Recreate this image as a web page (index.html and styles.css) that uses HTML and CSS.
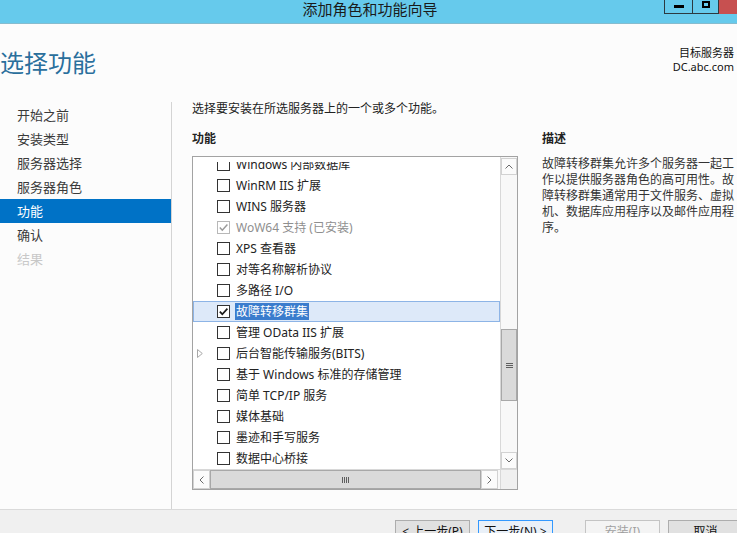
FILE: index.html
```html
<!DOCTYPE html>
<html lang="zh-CN">
<head>
<meta charset="utf-8">
<title>添加角色和功能向导</title>
<link rel="stylesheet" href="styles.css">
</head>
<body>
<div class="window">
  <header class="titlebar">
    <span></span>
    <div class="title">添加角色和功能向导</div>
    <div class="controls">
      <span class="ctl ctl-min"><i></i></span>
      <span class="ctl ctl-max"><i></i></span>
      <span class="ctl ctl-close"></span>
    </div>
  </header>

  <div class="header">
    <h1>选择功能</h1>
    <div class="target">
      <div>目标服务器</div>
      <div>DC.abc.com</div>
    </div>
  </div>

  <div class="content">
    <nav class="steps">
      <div class="step">开始之前</div>
      <div class="step">安装类型</div>
      <div class="step">服务器选择</div>
      <div class="step">服务器角色</div>
      <div class="step active">功能</div>
      <div class="step">确认</div>
      <div class="step disabled">结果</div>
    </nav>

    <main class="page">
      <p class="intro">选择要安装在所选服务器上的一个或多个功能。</p>
      <div class="cols">
        <div class="label">功能</div>
        <div class="label">描述</div>

        <div class="listbox">
          <div class="viewport">
            <div class="clip">
              <ul class="features">
                <li class="item"><span class="exp"></span><span class="cb"></span><span class="txt">Windows 内部数据库</span></li>
                <li class="item"><span class="exp"></span><span class="cb"></span><span class="txt">WinRM IIS 扩展</span></li>
                <li class="item"><span class="exp"></span><span class="cb"></span><span class="txt">WINS 服务器</span></li>
                <li class="item disabled"><span class="exp"></span><span class="cb"><svg viewBox="0 0 11 11" width="11" height="11"><polyline points="1.8,5.6 4.3,8.2 9.4,2.6" fill="none" stroke="#9a9a9a" stroke-width="1.5"/></svg></span><span class="txt">WoW64 支持 (已安装)</span></li>
                <li class="item"><span class="exp"></span><span class="cb"></span><span class="txt">XPS 查看器</span></li>
                <li class="item"><span class="exp"></span><span class="cb"></span><span class="txt">对等名称解析协议</span></li>
                <li class="item"><span class="exp"></span><span class="cb"></span><span class="txt">多路径 I/O</span></li>
                <li class="item selected"><span class="exp"></span><span class="cb"><svg viewBox="0 0 11 11" width="11" height="11"><polyline points="1.8,5.6 4.3,8.2 9.4,2.6" fill="none" stroke="#1a1a1a" stroke-width="1.7"/></svg></span><span class="txt">故障转移群集</span></li>
                <li class="item"><span class="exp"></span><span class="cb"></span><span class="txt">管理 OData IIS 扩展</span></li>
                <li class="item"><span class="exp"><svg viewBox="0 0 6 9" width="6" height="9"><polygon points="0.5,0.5 5.3,4.5 0.5,8.5" fill="none" stroke="#a8a8a8" stroke-width="1"/></svg></span><span class="cb"></span><span class="txt">后台智能传输服务(BITS)</span></li>
                <li class="item"><span class="exp"></span><span class="cb"></span><span class="txt">基于 Windows 标准的存储管理</span></li>
                <li class="item"><span class="exp"></span><span class="cb"></span><span class="txt">简单 TCP/IP 服务</span></li>
                <li class="item"><span class="exp"></span><span class="cb"></span><span class="txt">媒体基础</span></li>
                <li class="item"><span class="exp"></span><span class="cb"></span><span class="txt">墨迹和手写服务</span></li>
                <li class="item"><span class="exp"></span><span class="cb"></span><span class="txt">数据中心桥接</span></li>
                <li class="item"><span class="exp"></span><span class="cb"></span><span class="txt">无线 LAN 服务</span></li>
              </ul>
            </div>
          </div>

          <div class="vscroll">
            <span class="sbtn"><svg viewBox="0 0 8 5" width="8" height="5"><polyline points="0.5,4.5 4,1 7.5,4.5" fill="none" stroke="#6a6a6a" stroke-width="1"/></svg></span>
            <div class="vtrack">
              <span class="vthumb"><i class="grip-v"></i></span>
            </div>
            <span class="sbtn"><svg viewBox="0 0 8 5" width="8" height="5"><polyline points="0.5,0.5 4,4 7.5,0.5" fill="none" stroke="#6a6a6a" stroke-width="1"/></svg></span>
          </div>

          <div class="hscroll">
            <span class="sbtn hbtn"><svg viewBox="0 0 5 8" width="5" height="8"><polyline points="4.5,0.5 1,4 4.5,7.5" fill="none" stroke="#6a6a6a" stroke-width="1"/></svg></span>
            <span class="hthumb"><i class="grip-h"></i></span>
            <span class="sbtn hbtn"><svg viewBox="0 0 5 8" width="5" height="8"><polyline points="0.5,0.5 4,4 0.5,7.5" fill="none" stroke="#6a6a6a" stroke-width="1"/></svg></span>
          </div>
          <div class="corner"></div>
        </div>

        <p class="desc">故障转移群集允许多个服务器一起工作以提供服务器角色的高可用性。故障转移群集通常用于文件服务、虚拟机、数据库应用程序以及邮件应用程序。</p>
      </div>
    </main>
  </div>

  <footer class="footer">
    <button class="btn">&lt; 上一步(P)</button>
    <button class="btn primary">下一步(N) &gt;</button>
    <button class="btn install" disabled>安装(I)</button>
    <button class="btn">取消</button>
  </footer>
</div>
</body>
</html>
```

FILE: styles.css
```css
html, body {
  margin: 0;
  padding: 0;
}

body {
  background: #fcfcfc;
  font-family: "Noto Sans", "Noto Sans CJK SC", sans-serif;
  color: #222;
  overflow: hidden;
}

.window {
  width: 737px;
  height: 533px;
  display: flex;
  flex-direction: column;
  overflow: hidden;
  background: #fcfcfc;
}

/* ---------- title bar ---------- */
.titlebar {
  flex: none;
  height: 23px;
  border-bottom: 1px solid #86bccf;
  background: #66caec;
  display: grid;
  grid-template-columns: 1fr auto 1fr;
  align-items: start;
}

.title {
  font-size: 15px;
  line-height: 18px;
  color: #1a1a1a;
  white-space: nowrap;
  padding-left: 3px;
}

.controls {
  justify-self: end;
  display: flex;
  height: 14px;
}

.ctl {
  height: 14px;
  box-sizing: border-box;
  display: flex;
  justify-content: center;
}

.ctl-min {
  width: 28px;
  border-left: 1px solid #2c3940;
  border-bottom: 1px solid #2c3940;
  align-items: flex-start;
}

.ctl-min i {
  display: block;
  width: 10px;
  height: 3px;
  margin-top: 5px;
  background: #000;
}

.ctl-max {
  width: 26px;
  border-left: 1px solid #2c3940;
  border-bottom: 1px solid #2c3940;
  align-items: flex-start;
}

.ctl-max i {
  display: block;
  width: 8px;
  height: 7px;
  margin-top: 1px;
  box-sizing: border-box;
  border: 2px solid #000;
}

.ctl-close {
  width: 19px;
  background: #c75050;
  border-left: 1px solid #2c3940;
}

/* ---------- header ---------- */
.header {
  flex: none;
  height: 78px;
  box-sizing: border-box;
  padding: 22px 3px 0 0;
  display: flex;
  justify-content: space-between;
  align-items: flex-start;
}

.header h1 {
  margin: 0;
  font-size: 24px;
  font-weight: 400;
  line-height: 34px;
  color: #2a6f9c;
}

.target {
  font-size: 11px;
  line-height: 14px;
  text-align: right;
  color: #111;
}

/* ---------- body ---------- */
.content {
  flex: 1;
  min-height: 0;
  display: flex;
}

.steps {
  flex: none;
  width: 171px;
  padding-top: 1px;
  border-right: 1px solid #d4d4d4;
}

.step {
  height: 24px;
  line-height: 24px;
  padding-left: 17px;
  font-size: 13px;
  color: #3a3a3a;
}

.step.active {
  background: #0072c6;
  color: #fff;
}

.step.disabled {
  color: #c8c8c8;
}

.page {
  flex: 1;
  min-width: 0;
  padding-left: 20px;
}

.intro {
  margin: 0;
  font-size: 12px;
  line-height: 14px;
  color: #222;
}

.cols {
  margin-top: 15px;
  display: grid;
  grid-template-columns: 326px 1fr;
  column-gap: 24px;
}

.label {
  font-size: 12px;
  font-weight: 700;
  line-height: 16px;
  margin-bottom: 9px;
  color: #222;
}

.desc {
  margin: 0;
  font-size: 12px;
  line-height: 16px;
  color: #333;
}

/* ---------- list box ---------- */
.listbox {
  height: 334px;
  box-sizing: border-box;
  border: 1px solid #a3a3a3;
  background: #fff;
  display: grid;
  grid-template-columns: 307px 17px;
  grid-template-rows: 312px 20px;
}

.viewport {
  display: flex;
  flex-direction: column;
  padding-top: 5px;
  box-sizing: border-box;
  min-height: 0;
}

.clip {
  flex: 1;
  min-height: 0;
  overflow: hidden;
}

.features {
  list-style: none;
  margin: -8px 0 0;
  padding: 0;
}

.item {
  height: 21px;
  box-sizing: border-box;
  display: flex;
  align-items: center;
  font-size: 12px;
  color: #222;
  border: 1px solid transparent;
}

.exp {
  flex: none;
  width: 23px;
  padding-left: 3px;
  box-sizing: border-box;
  display: flex;
  align-items: center;
}

.cb {
  flex: none;
  width: 13px;
  height: 13px;
  box-sizing: border-box;
  border: 1px solid #333;
  background: #fff;
  display: flex;
  align-items: center;
  justify-content: center;
}

.txt {
  margin-left: 5px;
  padding: 0 1px;
  line-height: 17px;
  white-space: nowrap;
}

.item.disabled {
  color: #8f8f8f;
}

.item.disabled .cb {
  border-color: #b8b8b8;
}

.item.selected {
  background: #dde9f9;
  border-color: #8db4e6;
}

.item.selected .txt {
  background: #3a7ccd;
  color: #fff;
}

/* ---------- scroll bars ---------- */
.sbtn {
  flex: none;
  box-sizing: border-box;
  border: 1px solid #d2d2d2;
  background: #fbfbfb;
  display: flex;
  align-items: center;
  justify-content: center;
}

.vscroll {
  display: flex;
  flex-direction: column;
  box-sizing: border-box;
  border-left: 1px solid #d8d8d8;
  background: #f8f8f8;
}

.vscroll .sbtn {
  height: 17px;
  margin-top: 1px;
}

.vscroll .sbtn:last-child {
  margin-top: 0;
}

.vtrack {
  flex: 1;
}

.vthumb {
  display: flex;
  align-items: center;
  justify-content: center;
  height: 72px;
  margin-top: 154px;
  box-sizing: border-box;
  border: 1px solid #a8a8a8;
  background: #dadada;
}

.grip-v {
  display: block;
  width: 7px;
  height: 5px;
  background: repeating-linear-gradient(180deg, #5f5f5f 0 1px, transparent 1px 2px);
}

.hscroll {
  display: flex;
  box-sizing: border-box;
  border-top: 1px solid #d8d8d8;
  background: #f8f8f8;
  padding-right: 2px;
}

.hbtn {
  width: 17px;
}

.hthumb {
  flex: 1;
  box-sizing: border-box;
  border: 1px solid #a8a8a8;
  background: #dadada;
  display: flex;
  align-items: center;
  justify-content: center;
}

.grip-h {
  display: block;
  width: 7px;
  height: 6px;
  background: repeating-linear-gradient(90deg, #5f5f5f 0 1px, transparent 1px 2px);
}

.corner {
  background: #f0f0f0;
  border-left: 1px solid #d8d8d8;
  border-top: 1px solid #d8d8d8;
}

/* ---------- footer ---------- */
.footer {
  flex: none;
  height: 24px;
  box-sizing: border-box;
  border-top: 1px solid #dadada;
  background: #f0f0f0;
  display: flex;
  gap: 8px;
  padding: 10px 0 0 395px;
  overflow: hidden;
}

.btn {
  flex: none;
  width: 75px;
  height: 23px;
  box-sizing: border-box;
  padding: 0;
  border: 1px solid #adadad;
  background: #e1e1e1;
  font-family: inherit;
  font-size: 12px;
  line-height: 21px;
  color: #111;
  text-align: center;
}

.btn.primary {
  border-color: #3399ff;
  background: #e9f0f8;
}

.btn.install {
  margin-left: 24px;
}

.btn:disabled {
  border-color: #c4c4c4;
  background: #f4f4f4;
  color: #a0a0a0;
}
```
